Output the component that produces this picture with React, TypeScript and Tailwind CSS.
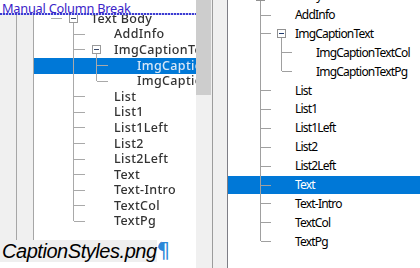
import React from 'react';

type Row = { t: string; L: number; box?: boolean; last?: boolean; pipes?: number[]; sel?: boolean };

type Cfg = {
  h: number;
  text0: number;
  indent: number;
  boxOff: number;
  stub: number;
  line: string;
  boxStroke: string;
  minus: string;
  rowClass: string;
  textClass: string;
  selTextClass: string;
};

const rowsData = (sel: string): Row[] =>
  [
    { t: 'Text Body', L: 0, box: true },
    { t: 'AddInfo', L: 1 },
    { t: 'ImgCaptionText', L: 1, box: true },
    { t: 'ImgCaptionTextCol', L: 2, pipes: [1] },
    { t: 'ImgCaptionTextPg', L: 2, pipes: [1], last: true },
    { t: 'List', L: 1 },
    { t: 'List1', L: 1 },
    { t: 'List1Left', L: 1 },
    { t: 'List2', L: 1 },
    { t: 'List2Left', L: 1 },
    { t: 'Text', L: 1 },
    { t: 'Text-Intro', L: 1 },
    { t: 'TextCol', L: 1 },
    { t: 'TextPg', L: 1, last: true },
  ].map((r) => ({ ...r, sel: r.t === sel }));

function TreeRow({ r, c }: { r: Row; c: Cfg }) {
  const tx = (l: number) => c.text0 + c.indent * l;
  const bc = (l: number) => tx(l) - c.boxOff;
  const w = tx(r.L);
  const h = c.h;
  const cy = Math.floor(h / 2);
  const conn = bc(r.L - 1);
  const els: React.ReactNode[] = [];
  (r.pipes || []).forEach((k) =>
    els.push(<rect key={'p' + k} x={bc(k - 1)} y={0} width={1} height={h} fill={c.line} />)
  );
  if (r.L >= 1)
    els.push(<rect key="v" x={conn} y={0} width={1} height={r.last ? cy : h} fill={c.line} />);
  els.push(<rect key="s" x={conn + 1} y={cy} width={c.stub} height={1} fill={c.line} />);
  if (r.box) {
    const b = bc(r.L);
    els.push(<rect key="bl" x={b} y={cy + 5} width={1} height={h - cy - 5} fill={c.line} />);
    els.push(
      <rect key="b" x={b - 3.5} y={cy - 3.5} width={8} height={8} fill="#ffffff" stroke={c.boxStroke} strokeWidth={1} />
    );
    els.push(<rect key="m" x={b - 2} y={cy} width={5} height={1} fill={c.minus} />);
  }
  return (
    <div className={`${c.rowClass} flex items-center whitespace-nowrap ${r.sel ? 'bg-[#0078d7]' : ''}`}>
      <svg width={w} height={h} className="shrink-0" shapeRendering="crispEdges">
        {els}
      </svg>
      <span className={r.sel ? c.selTextClass : c.textClass}>{r.t}</span>
    </div>
  );
}

const leftCfg: Cfg = {
  h: 15.6,
  text0: 57,
  indent: 23,
  boxOff: 18,
  stub: 11,
  line: '#a9a9a9',
  boxStroke: '#9a9a9a',
  minus: '#3a4a6a',
  rowClass: 'h-[15.6px]',
  textClass: "font-['Noto_Sans',sans-serif] text-[12.5px] font-medium tracking-[0.35px] text-[#333333] leading-none",
  selTextClass: "font-['Noto_Sans',sans-serif] text-[12.5px] font-medium tracking-[0.35px] text-[#d9e8f7] leading-none",
};

const rightCfg: Cfg = {
  h: 18.9,
  text0: 46,
  indent: 21,
  boxOff: 14,
  stub: 10,
  line: '#a0a0a0',
  boxStroke: '#919191',
  minus: '#1f3a6e',
  rowClass: 'h-[18.9px]',
  textClass: "font-['Noto_Sans',sans-serif] text-[12px] tracking-[-0.8px] text-[#000000] leading-none",
  selTextClass: "font-['Noto_Sans',sans-serif] text-[12px] tracking-[-0.8px] text-white leading-none",
};

export default function App() {
  const leftRows = rowsData('ImgCaptionTextCol');
  const rightRows = rowsData('Text');
  return (
    <div className="w-[420px] h-[268px] flex overflow-hidden bg-white">
      {/* Left: document with embedded screenshot */}
      <div className="w-[212px] h-full flex shrink-0">
        <div className="w-[196px] h-full flex flex-col shrink-0">
          <div className="h-[15px] flex flex-col shrink-0 bg-white">
            <div className="h-[13px] pt-[2px] pl-[2px] overflow-visible whitespace-nowrap font-['Noto_Sans',sans-serif] text-[12.8px] tracking-[-0.25px] leading-[13px] text-[#3b24c8]">
              Manual Column Break
            </div>
            <div className="h-[2px] bg-[repeating-linear-gradient(90deg,#3c3cd2_0px,#3c3cd2_2px,#c8c8f4_2px,#c8c8f4_3px)]" />
          </div>
          <div className="h-[225px] flex shrink-0">
            <div className="w-[16px] bg-[#f0f0f0]" />
            <div className="w-px bg-[#a6a6a6]" />
            <div className="w-[16px] bg-[#f0f0f0]" />
            <div className="w-px bg-[#a6a6a6]" />
            <div className="flex-1 overflow-hidden bg-white blur-[0.35px]">
              <div className="-mt-[3.8px] flex flex-col">
                {leftRows.map((r) => (
                  <TreeRow key={r.t} r={r} c={leftCfg} />
                ))}
              </div>
            </div>
          </div>
          <div className="h-[22px] flex items-center shrink-0 whitespace-nowrap">
            <span className="h-[22px] flex items-center bg-[#efefef] pl-[2px] font-['Liberation_Sans',Arial,sans-serif] italic text-[20px] tracking-[-0.45px] text-black leading-none">
              CaptionStyles.png
            </span>
            <svg width="6" height="22" className="shrink-0 -mr-[6px]" viewBox="0 0 6 22">
              <path d="M1 8 L4 2 L5.5 3" fill="none" stroke="#9a9a9a" strokeWidth="1" />
            </svg>
            <span className="font-['DejaVu_Sans',sans-serif] text-[21px] leading-none text-[#2b87d8]">¶</span>
          </div>
          <div className="flex-1 bg-white" />
        </div>
        <div className="w-[16px] h-full flex flex-col bg-[#f0f0f0] shrink-0">
          <div className="w-[15px] h-[95px] bg-[#cdcdcd]" />
        </div>
      </div>
      {/* Right: live tree view */}
      <div className="flex-1 h-full flex">
        <div className="w-px bg-[#9c9c9c]" />
        <div className="w-[14px] bg-[#f0f0f0]" />
        <div className="w-px bg-[#7e7e86]" />
        <div className="flex-1 overflow-hidden bg-white">
          <div className="-mt-[13.35px] flex flex-col">
            {rightRows.map((r) => (
              <TreeRow key={r.t} r={r} c={rightCfg} />
            ))}
          </div>
        </div>
      </div>
    </div>
  );
}
